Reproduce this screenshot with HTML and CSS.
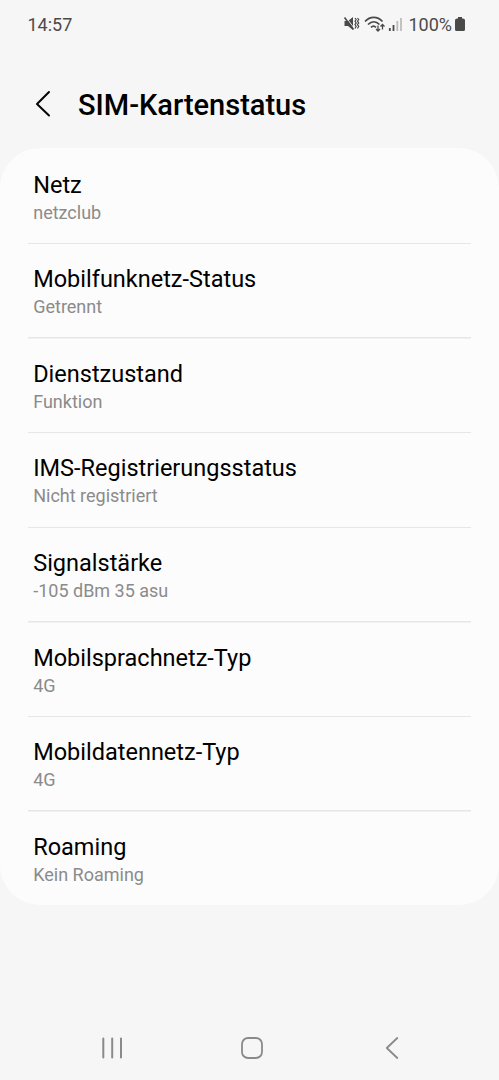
FILE: index.html
```html
<!DOCTYPE html>
<html lang="de">
<head>
<meta charset="utf-8">
<title>SIM-Kartenstatus</title>
<link rel="stylesheet" href="styles.css">
</head>
<body>
<div class="statusbar">
  <span class="clock">14:57</span>
  <div class="indicators">
    <svg class="status-icons" width="62" height="20" viewBox="0 0 62 20" fill="none" stroke="#4a4a4a" stroke-width="1.500">
      <path d="M1.500 7H5l5-4v13l-5-4H1.500z" fill="#4a4a4a" stroke="none"/>
      <path d="M2.500 2.500L12 15.500" stroke="#f6f6f6" stroke-width="1"/>
      <path d="M1.500 3.500L10.500 15.500" stroke-width="1.500"/>
      <path d="M12 4l1.200 1.500L12 7.200l1.200 1.700L12 10.600l1.200 1.700L12 14.500M14.500 4l1.200 1.500-1.200 1.700 1.200 1.700-1.200 1.700 1.200 1.700-1.200 2.200" stroke-width="1.200"/>
      <path d="M22 7.500c5-5.500 12.500-5.500 17.500 0M25 10.500c3.500-3.500 8-3.500 11.500 0M28 13.300c1.500-1.500 3.500-1.500 5 0" stroke-width="1.700"/>
      <path d="M35 11.500v5.500M33 15l2 2 2-2M39.500 15.500v-5M37.500 12.500l2-2 2 2" stroke-width="1.300"/>
      <path d="M46.800 17v-3M50.500 17v-6" stroke-width="1.800"/>
      <path d="M54.300 17V7M58 17V4" stroke="#bdbdbd" stroke-width="1.800"/>
    </svg>
    <span class="percent">100%</span>
    <svg class="battery" width="10" height="16" viewBox="0 0 10 16"><path d="M3 1h4v1.500h1a2 2 0 0 1 2 2V13.500a1.500 1.500 0 0 1-1.500 1.500h-7A1.500 1.500 0 0 1 0 13.500V4.500a2 2 0 0 1 2-2h1z" fill="#4a4a4a"/></svg>
  </div>
</div>
<header class="header">
  <svg class="back" width="16" height="28" viewBox="0 0 16 28" fill="none" stroke="#050505" stroke-width="2" stroke-linecap="round" stroke-linejoin="round"><path d="M14 2L2 14l12 11.500"/></svg>
  <h1 class="title">SIM-Kartenstatus</h1>
</header>
<main class="card">
  <section class="row"><h2 class="label">Netz</h2><p class="value">netzclub</p></section>
  <section class="row"><h2 class="label">Mobilfunknetz-Status</h2><p class="value">Getrennt</p></section>
  <section class="row"><h2 class="label">Dienstzustand</h2><p class="value">Funktion</p></section>
  <section class="row"><h2 class="label">IMS-Registrierungsstatus</h2><p class="value">Nicht registriert</p></section>
  <section class="row"><h2 class="label">Signalstärke</h2><p class="value">-105 dBm 35 asu</p></section>
  <section class="row"><h2 class="label">Mobilsprachnetz-Typ</h2><p class="value">4G</p></section>
  <section class="row"><h2 class="label">Mobildatennetz-Typ</h2><p class="value">4G</p></section>
  <section class="row"><h2 class="label">Roaming</h2><p class="value">Kein Roaming</p></section>
</main>
<nav class="navbar">
  <svg width="24" height="24" viewBox="0 0 24 24" fill="none" stroke="#8a8a8a" stroke-width="2" stroke-linecap="round"><path d="M3.300 2.500v19M12.200 2.500v19M21 2.500v19"/></svg>
  <svg width="24" height="24" viewBox="0 0 24 24" fill="none" stroke="#8a8a8a" stroke-width="1.800"><rect x="2" y="2" width="20" height="20" rx="6"/></svg>
  <svg width="24" height="24" viewBox="0 0 24 24" fill="none" stroke="#8a8a8a" stroke-width="1.800" stroke-linecap="round" stroke-linejoin="round"><path d="M17.300 2L6.800 12l10.500 10"/></svg>
</nav>
</body>
</html>
```
FILE: styles.css
```css
* { box-sizing: border-box; margin: 0; }
body { display: flex; flex-direction: column; height: 1080px; background: #f6f6f6; font-family: Roboto, sans-serif; color: #000; }
.statusbar { display: flex; justify-content: space-between; align-items: center; height: 48px; padding: 0 34px 0 27.5px; font-size: 18px; color: #4a4a4a; }
.indicators { display: flex; align-items: center; }
.percent { margin: 0 3px 0 3.5px; }
.header { display: flex; align-items: center; gap: 27px; height: 100.4px; padding: 12px 0 0 35px; }
.title { margin-top: 2px; font-size: 29px; font-weight: 500; }
.card { height: 756.6px; border-radius: 40px; background: #fcfcfc; padding: 1.3px 28px 0; }
.row { height: 94.6px; padding: 20px 5.2px 0; background: linear-gradient(#e6e6e6, #e6e6e6) left bottom / 100% 1.5px no-repeat; }
.row:last-child { background: none; }
.label { font-size: 23.5px; line-height: 30px; font-weight: 400; }
.value { font-size: 18px; line-height: 25px; color: #8b8b8b; }
.navbar { display: flex; justify-content: space-between; align-items: center; height: 64px; margin-top: auto; padding: 0 95px 0 100px; }
```
